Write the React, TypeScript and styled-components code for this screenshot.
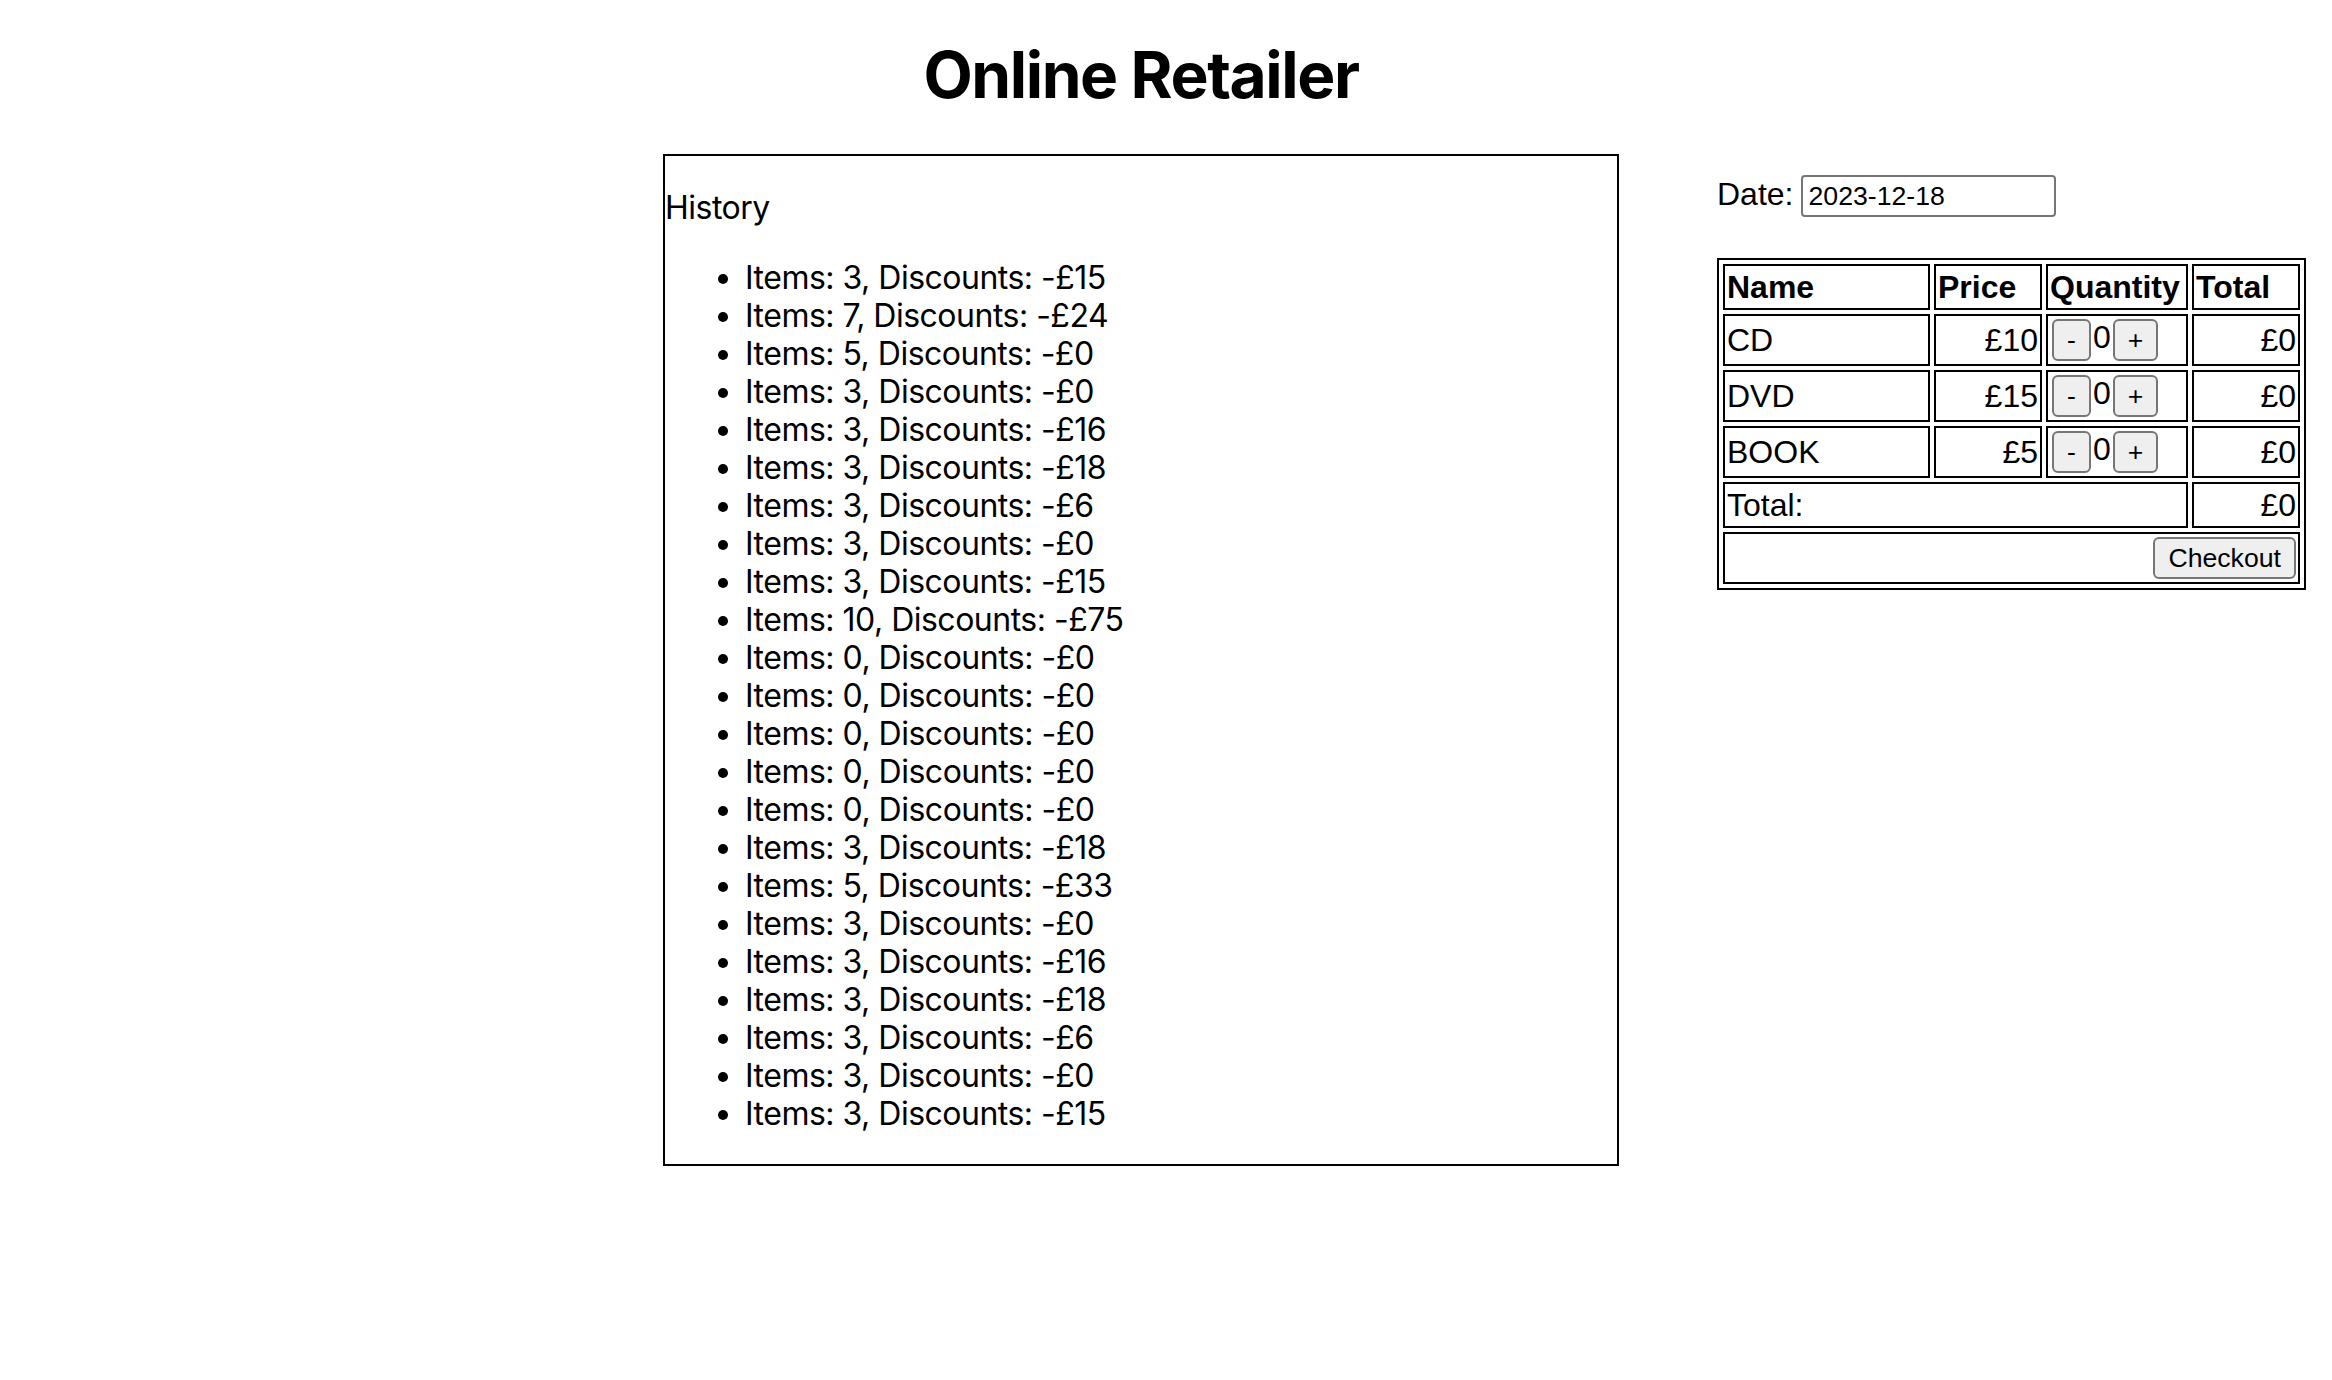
import React, { useState } from "react";
import styled, { createGlobalStyle } from "styled-components";

const GlobalStyle = createGlobalStyle`
  body {
    margin: 0;
    background: #ffffff;
    color: #000000;
    font-family: Inter, "Noto Sans", sans-serif;
  }
`;

const Page = styled.div`
  display: grid;
  grid-template-columns: minmax(0, 1fr) 956px minmax(0, 1fr);
  padding: 37px 50px 0 0;
`;

const Title = styled.h1`
  grid-column: 2;
  margin: 0 0 41px;
  font-size: 64px;
  line-height: 76px;
  font-weight: 700;
  letter-spacing: -1.4px;
  text-align: center;
`;

const HistoryBox = styled.div`
  grid-column: 2;
  align-self: start;
  border: 2px solid #000;
  font-size: 32px;
  line-height: 38px;
  letter-spacing: -0.5px;

  p {
    margin: 33px 0 32px;
  }
`;

const HistoryList = styled.ul`
  margin: 32px 0 31px;
  padding-left: 80px;
`;

const Cart = styled.div`
  grid-column: 3;
  align-self: start;
  margin-left: 98px;
  font-family: "Liberation Sans", Arial, sans-serif;
  font-size: 32px;
`;

const DateRow = styled.div`
  display: flex;
  align-items: flex-start;
  gap: 8px;
  margin: 21px 0 41px;
  line-height: 38px;
  white-space: nowrap;
`;

const DateInput = styled.input`
  box-sizing: border-box;
  width: 255px;
  height: 42px;
  padding: 0 5px;
  border: 2px solid #767676;
  border-radius: 4px;
  font-family: "Liberation Sans", Arial, sans-serif;
  font-size: 26.67px;
  color: #000;
`;

const Table = styled.table`
  width: 589px;
  table-layout: fixed;
  border: 2px solid #000;
  border-spacing: 4px;
`;

const HeadCell = styled.th<{ $w: number }>`
  box-sizing: border-box;
  width: ${(p) => p.$w}px;
  border: 2px solid #000;
  padding: 2px;
  text-align: left;
  font-weight: 700;
  line-height: 38px;
  white-space: nowrap;
`;

const Cell = styled.td<{ $right?: boolean; $tall?: boolean }>`
  box-sizing: border-box;
  border: 2px solid #000;
  padding: 2px;
  text-align: ${(p) => (p.$right ? "right" : "left")};
  line-height: ${(p) => (p.$tall ? "44px" : "38px")};
  white-space: nowrap;
`;

const Controls = styled.div<{ $end?: boolean }>`
  display: flex;
  align-items: center;
  justify-content: ${(p) => (p.$end ? "flex-end" : "flex-start")};
  height: 44px;
  padding-left: ${(p) => (p.$end ? "0" : "2px")};
`;

const QtyButton = styled.button`
  box-sizing: border-box;
  height: 42px;
  margin: 0;
  padding: 0 13px;
  border: 2px solid #767676;
  border-radius: 6px;
  background: #efefef;
  font-family: "Liberation Sans", Arial, sans-serif;
  font-size: 26.67px;
  line-height: 38px;
  color: #000;
`;

const Qty = styled.span`
  margin: 0 2px;
  line-height: 38px;
  align-self: flex-start;
`;

const products = [
  { name: "CD", price: 10 },
  { name: "DVD", price: 15 },
  { name: "BOOK", price: 5 },
];

const initialHistory = [
  [3, 15], [7, 24], [5, 0], [3, 0], [3, 16], [3, 18], [3, 6], [3, 0], [3, 15],
  [10, 75], [0, 0], [0, 0], [0, 0], [0, 0], [0, 0], [3, 18], [5, 33], [3, 0],
  [3, 16], [3, 18], [3, 6], [3, 0], [3, 15],
];

export default function App() {
  const [qty, setQty] = useState<number[]>([0, 0, 0]);
  const [history, setHistory] = useState(initialHistory);
  const [date, setDate] = useState("2023-12-18");

  const change = (i: number, d: number) =>
    setQty((q) => q.map((v, j) => (j === i ? Math.max(0, v + d) : v)));

  const total = products.reduce((s, p, i) => s + p.price * qty[i], 0);

  function checkout() {
    const items = qty.reduce((a, b) => a + b, 0);
    setHistory((h) => [...h, [items, 0]]);
    setQty([0, 0, 0]);
  }

  return (
    <>
      <GlobalStyle />
      <Page>
        <Title>Online Retailer</Title>
        <HistoryBox>
          <p>History</p>
          <HistoryList>
            {history.map(([items, disc], i) => (
              <li key={i}>
                Items: {items}, Discounts: -£{disc}
              </li>
            ))}
          </HistoryList>
        </HistoryBox>
        <Cart>
          <DateRow>
            Date:
            <DateInput value={date} onChange={(e) => setDate(e.target.value)} />
          </DateRow>
          <Table>
            <thead>
              <tr>
                <HeadCell $w={207}>Name</HeadCell>
                <HeadCell $w={108}>Price</HeadCell>
                <HeadCell $w={142}>Quantity</HeadCell>
                <HeadCell $w={108}>Total</HeadCell>
              </tr>
            </thead>
            <tbody>
              {products.map((p, i) => (
                <tr key={p.name}>
                  <Cell $tall>{p.name}</Cell>
                  <Cell $tall $right>£{p.price}</Cell>
                  <Cell $tall>
                    <Controls>
                      <QtyButton onClick={() => change(i, -1)}>-</QtyButton>
                      <Qty>{qty[i]}</Qty>
                      <QtyButton onClick={() => change(i, 1)}>+</QtyButton>
                    </Controls>
                  </Cell>
                  <Cell $tall $right>£{p.price * qty[i]}</Cell>
                </tr>
              ))}
              <tr>
                <Cell colSpan={3}>Total:</Cell>
                <Cell $right>£{total}</Cell>
              </tr>
              <tr>
                <Cell colSpan={4} $right $tall>
                  <Controls $end>
                    <QtyButton onClick={checkout}>Checkout</QtyButton>
                  </Controls>
                </Cell>
              </tr>
            </tbody>
          </Table>
        </Cart>
      </Page>
    </>
  );
}
